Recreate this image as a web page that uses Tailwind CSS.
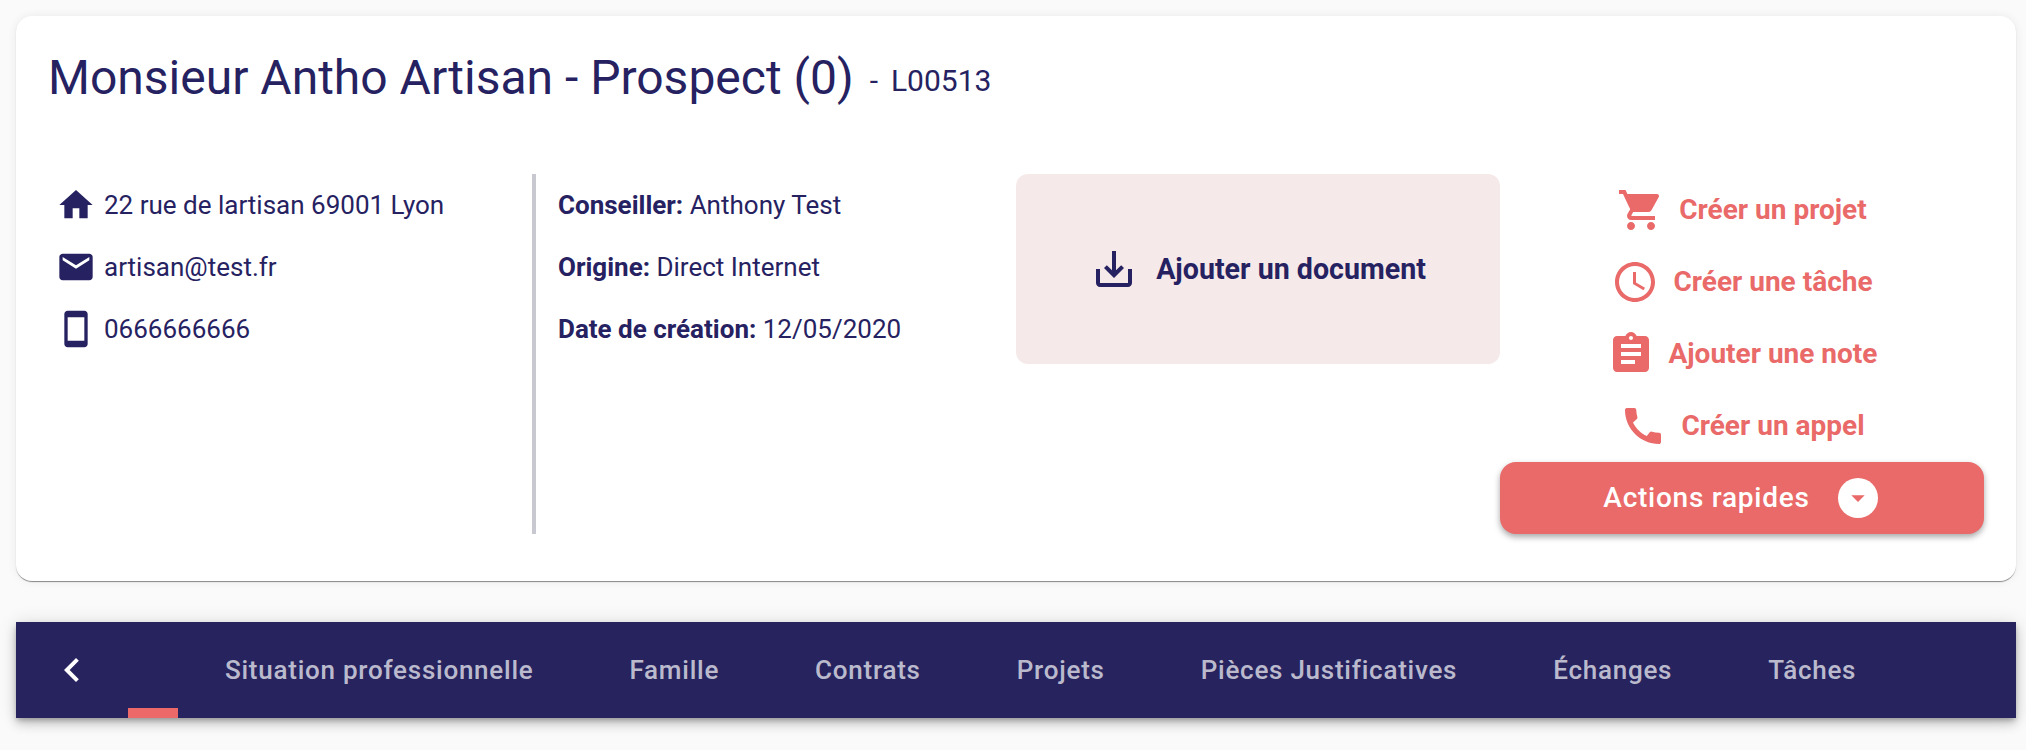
<!DOCTYPE html>
<html lang="fr">
<head>
  <meta charset="UTF-8" />
  <title>Monsieur Antho Artisan</title>
  <script src="https://cdn.jsdelivr.net/npm/@tailwindcss/browser@4"></script>
</head>
<body class="bg-[#fafafa] font-['Roboto',sans-serif] text-[#262262] h-[750px] overflow-hidden">
  <div class="pt-4 pl-4 pr-[10px]">
    <!-- Fiche -->
    <section class="bg-white rounded-[16px] h-[565px] shadow-[0_2px_1px_-1px_rgba(0,0,0,0.3),0_1px_1px_rgba(0,0,0,0.2),0_0_10px_rgba(0,0,0,0.07)]">
      <div class="h-[158px] pl-[32px] pt-[34px] flex items-start">
        <h1 class="text-[48px] leading-[56px] font-normal">Monsieur Antho Artisan - Prospect (0)</h1>
        <span class="ml-4 text-[30px] mt-[8px]">-</span>
        <span class="ml-[13px] text-[30px] mt-[8px]">L00513</span>
      </div>
      <div class="grid grid-cols-[488px_480px_484px_484px] px-8 h-[360px]">
        <!-- Contact -->
        <div class="border-r-[4px] border-[#c8c8d0] pl-2 text-[26px] h-[360px]">
          <div class="flex items-center h-[62px]">
            <svg class="w-10 h-10 fill-current" viewBox="0 0 24 24"><path d="M10 20v-6h4v6h5v-8h3L12 3 2 12h3v8z"/></svg>
            <span class="ml-2">22 rue de lartisan 69001 Lyon</span>
          </div>
          <div class="flex items-center h-[62px]">
            <svg class="w-10 h-10 fill-current" viewBox="0 0 24 24"><path d="M20 4H4c-1.1 0-1.99.9-1.99 2L2 18c0 1.1.9 2 2 2h16c1.1 0 2-.9 2-2V6c0-1.1-.9-2-2-2zm0 4l-8 5-8-5V6l8 5 8-5v2z"/></svg>
            <span class="ml-2">artisan@test.fr</span>
          </div>
          <div class="flex items-center h-[62px]">
            <svg class="w-10 h-10 fill-current" viewBox="0 0 24 24"><path d="M17 1.01L7 1c-1.1 0-2 .9-2 2v18c0 1.1.9 2 2 2h10c1.1 0 2-.9 2-2V3c0-1.1-.9-1.99-2-1.99zM17 19H7V5h10v14z"/></svg>
            <span class="ml-2">0666666666</span>
          </div>
        </div>
        <!-- Infos -->
        <div class="pl-[22px] text-[26px]">
          <p class="h-[62px] leading-[62px]"><b class="font-bold">Conseiller:</b> Anthony Test</p>
          <p class="h-[62px] leading-[62px]"><b class="font-bold">Origine:</b> Direct Internet</p>
          <p class="h-[62px] leading-[62px]"><b class="font-bold">Date de création:</b> 12/05/2020</p>
        </div>
        <!-- Document -->
        <div class="bg-[#f5e9e9] rounded-[12px] h-[190px] flex items-center justify-center">
          <svg class="w-12 h-12 fill-current" viewBox="0 0 24 24"><path d="M19 12v7H5v-7H3v7c0 1.1.9 2 2 2h14c1.1 0 2-.9 2-2v-7h-2zm-6 .67l2.59-2.58L17 11.5l-5 5-5-5 1.41-1.41L11 12.67V3h2z"/></svg>
          <span class="ml-[18px] text-[28.6px] font-bold">Ajouter un document</span>
        </div>
        <!-- Actions -->
        <div class="text-[#e96a69] text-[28px] font-bold">
          <div class="flex items-center justify-center h-[72px]">
            <svg class="w-12 h-12 fill-current" viewBox="0 0 24 24"><path d="M7 18c-1.1 0-1.99.9-1.99 2S5.9 22 7 22s2-.9 2-2-.9-2-2-2zM1 2v2h2l3.6 7.59-1.35 2.45c-.16.28-.25.61-.25.96 0 1.1.9 2 2 2h12v-2H7.42c-.14 0-.25-.11-.25-.25l.03-.12.9-1.63h7.45c.75 0 1.41-.41 1.75-1.03l3.58-6.49c.08-.14.12-.31.12-.48 0-.55-.45-1-1-1H5.21l-.94-2H1zm16 16c-1.1 0-1.99.9-1.99 2s.89 2 1.99 2 2-.9 2-2-.9-2-2-2z"/></svg>
            <span class="ml-[14px]">Créer un projet</span>
          </div>
          <div class="flex items-center justify-center h-[72px]">
            <svg class="w-12 h-12 fill-current" viewBox="0 0 24 24"><path d="M11.99 2C6.47 2 2 6.48 2 12s4.47 10 9.99 10C17.52 22 22 17.52 22 12S17.52 2 11.99 2zM12 20c-4.42 0-8-3.58-8-8s3.58-8 8-8 8 3.58 8 8-3.58 8-8 8z"/><path d="M12.5 7H11v6l5.25 3.15.75-1.23-4.5-2.67z"/></svg>
            <span class="ml-[14px]">Créer une tâche</span>
          </div>
          <div class="flex items-center justify-center h-[72px]">
            <svg class="w-12 h-12 fill-current" viewBox="0 0 24 24"><path d="M19 3h-4.18C14.4 1.84 13.3 1 12 1c-1.3 0-2.4.84-2.82 2H5c-1.1 0-2 .9-2 2v14c0 1.1.9 2 2 2h14c1.1 0 2-.9 2-2V5c0-1.1-.9-2-2-2zm-7 0c.55 0 1 .45 1 1s-.45 1-1 1-1-.45-1-1 .45-1 1-1zm2 14H7v-2h7v2zm3-4H7v-2h10v2zm0-4H7V7h10v2z"/></svg>
            <span class="ml-[14px]">Ajouter une note</span>
          </div>
          <div class="flex items-center justify-center h-[72px]">
            <svg class="w-12 h-12 fill-current" viewBox="0 0 24 24"><path d="M20.01 15.38c-1.23 0-2.42-.2-3.53-.56-.35-.12-.74-.03-1.01.24l-1.57 1.97c-2.83-1.35-5.48-3.9-6.89-6.83l1.95-1.66c.27-.28.35-.67.24-1.02-.37-1.11-.56-2.3-.56-3.53 0-.54-.45-.99-.99-.99H4.19C3.65 3 3 3.24 3 3.99 3 13.28 10.73 21 20.01 21c.71 0 .99-.63.99-1.18v-3.45c0-.54-.45-.99-.99-.99z"/></svg>
            <span class="ml-[14px]">Créer un appel</span>
          </div>
          <button class="w-full h-[72px] pr-[3px] bg-[#e96a69] rounded-[16px] text-white text-[28px] font-medium tracking-[0.75px] flex items-center justify-center shadow-[0_3px_6px_rgba(0,0,0,0.35)]">
            <span>Actions rapides</span>
            <span class="ml-[28px] w-10 h-10 rounded-full bg-white flex items-center justify-center">
              <svg class="w-8 h-8 fill-[#e96a69]" viewBox="0 0 24 24"><path d="M7 10l5 5 5-5z"/></svg>
            </span>
          </button>
        </div>
      </div>
    </section>

    <!-- Onglets -->
    <nav class="mt-[41px] h-24 bg-[#26235f] relative flex items-center text-[26px] font-medium tracking-[0.75px] text-white/70 shadow-[0_3px_5px_-1px_rgba(0,0,0,0.25),0_6px_10px_rgba(0,0,0,0.16),0_1px_18px_rgba(0,0,0,0.12)]">
      <div class="w-[112px] flex justify-center">
        <svg class="w-12 h-12 fill-white" viewBox="0 0 24 24"><path d="M15.41 7.41L14 6l-6 6 6 6 1.41-1.41L10.83 12z"/></svg>
      </div>
      <div class="flex items-center pl-[97px] gap-[96px]">
        <span>Situation professionnelle</span>
        <span>Famille</span>
        <span>Contrats</span>
        <span>Projets</span>
        <span>Pièces Justificatives</span>
        <span>Échanges</span>
        <span>Tâches</span>
      </div>
      <div class="absolute left-[112px] bottom-0 w-[50px] h-[10px] bg-[#eb6a69]"></div>
    </nav>
  </div>
</body>
</html>
